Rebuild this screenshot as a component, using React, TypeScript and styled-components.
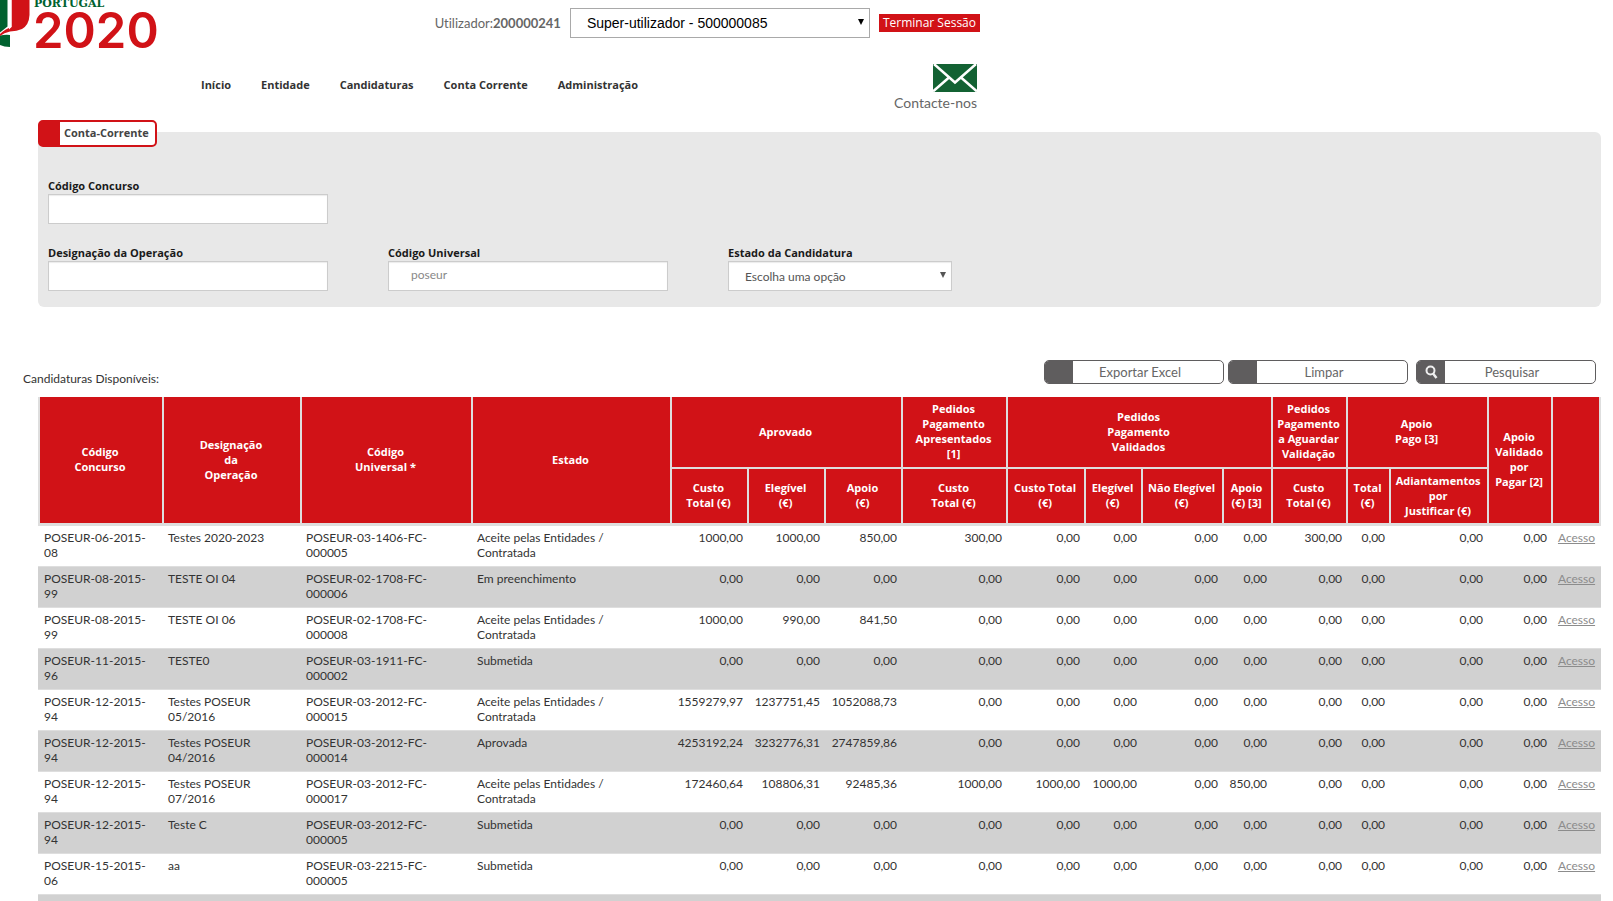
import React from "react";
import styled, { createGlobalStyle } from "styled-components";

const RED = "#d11217";
const LINE = "#dedede";
const HEADING_FONT = `"Open Sans", "Noto Sans", sans-serif`;

const GlobalStyle = createGlobalStyle`
  * { box-sizing: border-box; }
  body {
    margin: 0;
    background: #fff;
    color: #333;
    font-family: Lato, "Open Sans", sans-serif;
    font-size: 12px;
    line-height: 15px;
    font-variant-ligatures: none;
  }
  button, input, select { font: inherit; color: inherit; margin: 0; }
`;

const Header = styled.header`
  display: flex;
  align-items: flex-start;
  height: 120px;
`;

const LogoLink = styled.a`
  flex: none;
  width: 160px;
  svg { display: block; }
`;

const HeaderBody = styled.div`
  flex: 1;
  max-width: 820px;
`;

const UserBar = styled.div`
  display: flex;
  align-items: center;
  justify-content: flex-end;
  gap: 9px;
  padding-top: 8px;
`;

const UserLabel = styled.label`
  font-size: 13px;
  color: #666;
`;

const SelectBox = styled.span<{ $width: number }>`
  position: relative;
  display: block;
  width: ${(p) => p.$width}px;
  svg {
    position: absolute;
    right: 6px;
    top: 11px;
    pointer-events: none;
  }
`;

const ProfileSelect = styled.select`
  display: block;
  appearance: none;
  width: 100%;
  height: 30px;
  padding: 0 16px;
  border: 1px solid #a9a9a9;
  border-radius: 0;
  background: #fff;
  color: #000;
  font-family: "Liberation Sans", Arial, sans-serif;
  font-size: 14px;
`;

const LogoutButton = styled.button`
  height: 18px;
  padding: 0 4px;
  border: 0;
  background: ${RED};
  color: #fff;
  font-size: 12px;
  font-family: ${HEADING_FONT};
  line-height: 18px;
  white-space: nowrap;
`;

const NavRow = styled.div`
  display: flex;
  justify-content: space-between;
  align-items: flex-start;
  padding: 26px 3px 0 41px;
`;

const Nav = styled.nav`
  display: flex;
  gap: 30px;
  padding-top: 13px;
`;

const NavLink = styled.a`
  color: #333;
  font-family: ${HEADING_FONT};
  font-size: 11px;
  font-weight: 700;
  text-decoration: none;
`;

const ContactLink = styled.a`
  display: flex;
  flex-direction: column;
  align-items: flex-end;
  gap: 3px;
  color: #666;
  font-size: 14px;
  text-decoration: none;
`;

const Main = styled.main`
  padding: 0 12px 0 23px;
`;

const Section = styled.section`
  margin-left: 15px;
`;

const SectionTag = styled.h1`
  position: relative;
  width: fit-content;
  margin: 0 0 -15px;
  padding: 0 6px 2px 4px;
  border: 2px solid ${RED};
  border-left-width: 22px;
  border-radius: 5px;
  background: #fff;
  color: #444;
  font-family: ${HEADING_FONT};
  font-size: 11px;
  font-weight: 700;
  line-height: 21px;
`;

const FilterPanel = styled.form`
  display: grid;
  grid-template-columns: 280px 280px 224px;
  gap: 21px 60px;
  padding: 46px 10px 16px;
  border-radius: 6px;
  background: #e8e8e8;
`;

const Field = styled.div<{ $first?: boolean }>`
  grid-column: ${(p) => (p.$first ? "1 / -1" : "auto")};
`;

const FieldLabel = styled.label`
  display: block;
  padding-bottom: 1px;
  color: #1a1a1a;
  font-family: ${HEADING_FONT};
  font-size: 11px;
  font-weight: 700;
`;

const TextInput = styled.input`
  display: block;
  width: 280px;
  height: 30px;
  padding: 0 22px 3px;
  border: 1px solid #ccc;
  background: #fff;
  box-shadow: inset 0 1px 1px rgba(0, 0, 0, 0.08);
  color: #888;
`;

const FilterSelect = styled(ProfileSelect)`
  border-color: #ccc;
  box-shadow: inset 0 1px 1px rgba(0, 0, 0, 0.08);
  color: #555;
  font-family: inherit;
  font-size: 12px;
`;

const Toolbar = styled.div`
  display: flex;
  align-items: flex-start;
  justify-content: space-between;
  height: 90px;
  padding: 53px 5px 0 0;
`;

const Caption = styled.span`
  padding-top: 11px;
`;

const Actions = styled.div`
  display: flex;
  gap: 4px;
`;

const ActionButton = styled.button<{ $apart?: boolean }>`
  display: flex;
  width: 180px;
  height: 24px;
  padding: 0;
  margin-left: ${(p) => (p.$apart ? 4 : 0)}px;
  overflow: hidden;
  border: 1px solid #5f5d5e;
  border-radius: 5px;
  background: #fff;
  color: #666;
  font-size: 13px;
  line-height: 22px;
`;

const ActionIcon = styled.span`
  display: flex;
  align-items: center;
  justify-content: center;
  width: 28px;
  height: 22px;
  background: #5f5d5e;
`;

const ActionText = styled.span`
  flex: 1;
  padding-right: 16px;
  text-align: center;
`;

const Table = styled.table`
  width: 100%;
  table-layout: fixed;
  border-collapse: separate;
  border-spacing: 0;
`;

const Th = styled.th`
  padding: 3px 2px 5px 0;
  border-left: 2px solid ${LINE};
  border-bottom: 2px solid ${LINE};
  background: ${RED};
  color: #fff;
  font-family: ${HEADING_FONT};
  font-size: 11px;
  font-weight: 700;
  white-space: pre-line;
  &.last { border-right: 2px solid ${LINE}; }
`;

const HeadRow = styled.tr<{ $h: number }>`
  height: ${(p) => p.$h}px;
`;

const Row = styled.tr`
  height: 41px;
  &:nth-child(even) { background: #d1d1d1; }
`;

const Td = styled.td<{ $number?: boolean }>`
  padding: ${(p) => (p.$number ? "4px 4px 5px 0" : "4px 16px 5px 6px")};
  border-top: 1px solid ${LINE};
  text-align: ${(p) => (p.$number ? "right" : "left")};
  white-space: ${(p) => (p.$number ? "nowrap" : "normal")};
  vertical-align: top;
  &:last-child { padding-right: 6px; }
`;

const AccessLink = styled.a`
  color: #8c8c8c;
`;

const widths = [124, 138, 171, 199, 77, 77, 77, 105, 78, 57, 81, 49, 75, 43, 98, 64, 50];

type Entry = { contest: string; name: string; code: string; state: string; values: string[] };

const fill = (...start: string[]) => [...start, ...Array(12 - start.length).fill("0,00")];
const hired = "Aceite pelas Entidades / Contratada";

const entries: Entry[] = [
  { contest: "POSEUR-06-2015-08", name: "Testes 2020-2023", code: "POSEUR-03-1406-FC-000005", state: hired,
    values: fill("1000,00", "1000,00", "850,00", "300,00", "0,00", "0,00", "0,00", "0,00", "300,00") },
  { contest: "POSEUR-08-2015-99", name: "TESTE OI 04", code: "POSEUR-02-1708-FC-000006", state: "Em preenchimento", values: fill() },
  { contest: "POSEUR-08-2015-99", name: "TESTE OI 06", code: "POSEUR-02-1708-FC-000008", state: hired,
    values: fill("1000,00", "990,00", "841,50") },
  { contest: "POSEUR-11-2015-96", name: "TESTE0", code: "POSEUR-03-1911-FC-000002", state: "Submetida", values: fill() },
  { contest: "POSEUR-12-2015-94", name: "Testes POSEUR 05/2016", code: "POSEUR-03-2012-FC-000015", state: hired,
    values: fill("1559279,97", "1237751,45", "1052088,73") },
  { contest: "POSEUR-12-2015-94", name: "Testes POSEUR 04/2016", code: "POSEUR-03-2012-FC-000014", state: "Aprovada",
    values: fill("4253192,24", "3232776,31", "2747859,86") },
  { contest: "POSEUR-12-2015-94", name: "Testes POSEUR 07/2016", code: "POSEUR-03-2012-FC-000017", state: hired,
    values: fill("172460,64", "108806,31", "92485,36", "1000,00", "1000,00", "1000,00", "0,00", "850,00") },
  { contest: "POSEUR-12-2015-94", name: "Teste C", code: "POSEUR-03-2012-FC-000005", state: "Submetida", values: fill() },
  { contest: "POSEUR-15-2015-06", name: "aa", code: "POSEUR-03-2215-FC-000005", state: "Submetida", values: fill() },
];

const subHeads = [
  "Custo\nTotal (€)", "Elegível\n(€)", "Apoio\n(€)", "Custo\nTotal (€)", "Custo Total\n(€)", "Elegível\n(€)",
  "Não Elegível\n(€)", "Apoio\n(€) [3]", "Custo\nTotal (€)", "Total\n(€)", "Adiantamentos\npor\nJustificar (€)",
];

/* Lets the final number group of a code wrap as one piece. */
const Code = ({ value }: { value: string }) => {
  const cut = value.lastIndexOf("-") + 1;
  return <>{value.slice(0, cut)}<wbr />{value.slice(cut)}</>;
};

const Arrow = ({ color }: { color: string }) => (
  <svg width="6" height="7" viewBox="0 0 6 7" aria-hidden="true">
    <path d="M0 0H6L3 6Z" fill={color} />
  </svg>
);

const Logo = () => (
  <svg width="160" height="52" viewBox="0 0 160 52" role="img" aria-label="Portugal 2020">
    <path d="M0 0H7.500V26.500L0 32.500Z" fill="#00622f" />
    <path d="M0 35.500Q5 34.500 10 35V47Q4 47 0 45Z" fill="#00622f" />
    <path d="M11.500 0H29.500V15Q29 25 22 29Q17 31 10 31.500Q4 32.500 0 36V34Q5 29 11.500 27Z" fill={RED} />
    <path d="M9.500 0H11.500V27L9 29.500Z" fill="#fff" />
    <text x="34" y="7" fill="#00622f" fontFamily="DejaVu Serif, serif" fontWeight="700" fontSize="11">PORTUGAL</text>
    <text x="33" y="48" fill={RED} fontFamily="Inter, sans-serif" fontWeight="600" fontSize="49">2020</text>
  </svg>
);

export default function App() {
  return (
    <>
      <GlobalStyle />
      <Header>
        <LogoLink href="#inicio"><Logo /></LogoLink>
        <HeaderBody>
          <UserBar>
            <UserLabel htmlFor="perfil">Utilizador:<b>200000241</b></UserLabel>
            <SelectBox $width={300}>
              <ProfileSelect id="perfil"><option>Super-utilizador - 500000085</option></ProfileSelect>
              <Arrow color="#000" />
            </SelectBox>
            <LogoutButton type="button">Terminar Sessão</LogoutButton>
          </UserBar>
          <NavRow>
            <Nav>
              {["Início", "Entidade", "Candidaturas", "Conta Corrente", "Administração"].map((item) => (
                <NavLink key={item} href="#menu">{item}</NavLink>
              ))}
            </Nav>
            <ContactLink href="#contacto">
              <svg width="44" height="28" viewBox="0 0 44 28" aria-hidden="true">
                <path d="M0 0H44V28H0z" fill="#136233" />
                <path d="M1 0L22 18.500L43 0M0 27.500L16 13.500M44 27.500L28 13.500" fill="none" stroke="#fff" strokeWidth="2.500" />
              </svg>
              Contacte-nos
            </ContactLink>
          </NavRow>
        </HeaderBody>
      </Header>

      <Main>
        <Section>
          <SectionTag>Conta-Corrente</SectionTag>
          <FilterPanel>
            <Field $first>
              <FieldLabel htmlFor="concurso">Código Concurso</FieldLabel>
              <TextInput id="concurso" type="text" />
            </Field>
            <Field>
              <FieldLabel htmlFor="operacao">Designação da Operação</FieldLabel>
              <TextInput id="operacao" type="text" />
            </Field>
            <Field>
              <FieldLabel htmlFor="universal">Código Universal</FieldLabel>
              <TextInput id="universal" type="text" defaultValue="poseur" />
            </Field>
            <Field>
              <FieldLabel htmlFor="estado">Estado da Candidatura</FieldLabel>
              <SelectBox $width={224}>
                <FilterSelect id="estado"><option>Escolha uma opção</option></FilterSelect>
                <Arrow color="#555" />
              </SelectBox>
            </Field>
          </FilterPanel>
        </Section>

        <Toolbar>
          <Caption>Candidaturas Disponíveis:</Caption>
          <Actions>
            <ActionButton type="button"><ActionIcon /><ActionText>Exportar Excel</ActionText></ActionButton>
            <ActionButton type="button"><ActionIcon /><ActionText>Limpar</ActionText></ActionButton>
            <ActionButton type="button" $apart>
              <ActionIcon>
                <svg width="14" height="14" viewBox="0 0 14 14" fill="none" stroke="#eee" aria-hidden="true">
                  <circle cx="6.500" cy="5.500" r="4" strokeWidth="2" />
                  <path d="M9 8.500L12.500 13" strokeWidth="2.500" />
                </svg>
              </ActionIcon>
              <ActionText>Pesquisar</ActionText>
            </ActionButton>
          </Actions>
        </Toolbar>

        <Section>
          <Table>
            <colgroup>{widths.map((w, i) => <col key={i} width={w} />)}</colgroup>
            <thead>
              <HeadRow $h={72}>
                <Th rowSpan={2}>{"Código\nConcurso"}</Th>
                <Th rowSpan={2}>{"Designação\nda\nOperação"}</Th>
                <Th rowSpan={2}>{"Código\nUniversal *"}</Th>
                <Th rowSpan={2}>Estado</Th>
                <Th colSpan={3}>Aprovado</Th>
                <Th>{"Pedidos\nPagamento\nApresentados\n[1]"}</Th>
                <Th colSpan={4}>{"Pedidos\nPagamento\nValidados"}</Th>
                <Th>{"Pedidos\nPagamento\na Aguardar\nValidação"}</Th>
                <Th colSpan={2}>{"Apoio\nPago [3]"}</Th>
                <Th rowSpan={2}>{"Apoio\nValidado\npor\nPagar [2]"}</Th>
                <Th rowSpan={2} className="last" aria-label="Acesso" />
              </HeadRow>
              <HeadRow $h={56}>
                {subHeads.map((h, i) => <Th key={i}>{h}</Th>)}
              </HeadRow>
            </thead>
            <tbody>
              {entries.map((e) => (
                <Row key={e.code + e.name}>
                  <Td><Code value={e.contest} /></Td>
                  <Td>{e.name}</Td>
                  <Td><Code value={e.code} /></Td>
                  <Td>{e.state}</Td>
                  {e.values.map((v, i) => <Td key={i} $number>{v}</Td>)}
                  <Td $number><AccessLink href="#acesso">Acesso</AccessLink></Td>
                </Row>
              ))}
              <Row><Td colSpan={17} /></Row>
            </tbody>
          </Table>
        </Section>
      </Main>
    </>
  );
}
